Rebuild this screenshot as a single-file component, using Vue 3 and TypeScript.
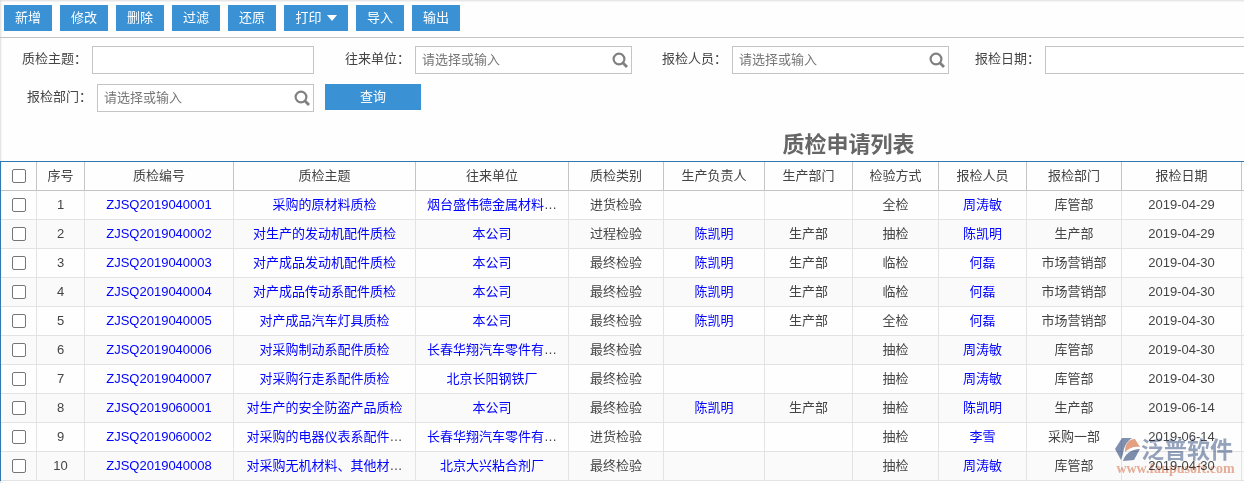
<script setup lang="ts">
import { ref } from 'vue'

interface Row {
  code: string
  subject: string
  company: string
  kind: string
  owner: string
  ownerDept: string
  method: string
  reporter: string
  dept: string
  date: string
}

const actions: { text: string; menu?: boolean }[] = [
  { text: '新增' },
  { text: '修改' },
  { text: '删除' },
  { text: '过滤' },
  { text: '还原' },
  { text: '打印', menu: true },
  { text: '导入' },
  { text: '输出' },
]

const fields = ref([
  { id: 'subject', label: '质检主题', lookup: false, value: '' },
  { id: 'company', label: '往来单位', lookup: true, value: '' },
  { id: 'reporter', label: '报检人员', lookup: true, value: '' },
  { id: 'date', label: '报检日期', lookup: false, value: '' },
  { id: 'dept', label: '报检部门', lookup: true, value: '' },
])

const headers = [
  '序号', '质检编号', '质检主题', '往来单位', '质检类别', '生产负责人',
  '生产部门', '检验方式', '报检人员', '报检部门', '报检日期',
]

const source: string[][] = [
  ['ZJSQ2019040001', '采购的原材料质检', '烟台盛伟德金属材料…', '进货检验', '', '', '全检', '周涛敏', '库管部', '2019-04-29'],
  ['ZJSQ2019040002', '对生产的发动机配件质检', '本公司', '过程检验', '陈凯明', '生产部', '抽检', '陈凯明', '生产部', '2019-04-29'],
  ['ZJSQ2019040003', '对产成品发动机配件质检', '本公司', '最终检验', '陈凯明', '生产部', '临检', '何磊', '市场营销部', '2019-04-30'],
  ['ZJSQ2019040004', '对产成品传动系配件质检', '本公司', '最终检验', '陈凯明', '生产部', '临检', '何磊', '市场营销部', '2019-04-30'],
  ['ZJSQ2019040005', '对产成品汽车灯具质检', '本公司', '最终检验', '陈凯明', '生产部', '全检', '何磊', '市场营销部', '2019-04-30'],
  ['ZJSQ2019040006', '对采购制动系配件质检', '长春华翔汽车零件有…', '最终检验', '', '', '抽检', '周涛敏', '库管部', '2019-04-30'],
  ['ZJSQ2019040007', '对采购行走系配件质检', '北京长阳钢铁厂', '最终检验', '', '', '抽检', '周涛敏', '库管部', '2019-04-30'],
  ['ZJSQ2019060001', '对生产的安全防盗产品质检', '本公司', '最终检验', '陈凯明', '生产部', '抽检', '陈凯明', '生产部', '2019-06-14'],
  ['ZJSQ2019060002', '对采购的电器仪表系配件…', '长春华翔汽车零件有…', '进货检验', '', '', '抽检', '李雪', '采购一部', '2019-06-14'],
  ['ZJSQ2019040008', '对采购无机材料、其他材…', '北京大兴粘合剂厂', '最终检验', '', '', '抽检', '周涛敏', '库管部', '2019-04-30'],
]

const rows: Row[] = source.map(
  ([code, subject, company, kind, owner, ownerDept, method, reporter, dept, date]) => ({
    code, subject, company, kind, owner, ownerDept, method, reporter, dept, date,
  }),
)

const linked: (keyof Row)[] = ['code', 'subject', 'company', 'owner', 'reporter']
const keys: (keyof Row)[] = [
  'code', 'subject', 'company', 'kind', 'owner', 'ownerDept', 'method', 'reporter', 'dept', 'date',
]

const picked = ref<boolean[]>(rows.map(() => false))

function toggleAll(e: Event) {
  const on = (e.target as HTMLInputElement).checked
  picked.value = rows.map(() => on)
}
</script>

<template>
  <div class="page" lang="zh-CN">
    <nav class="toolbar">
      <button v-for="a in actions" :key="a.text" type="button" class="btn" :class="{ menu: a.menu }">
        {{ a.text }}<span v-if="a.menu" class="caret"></span>
      </button>
    </nav>

    <form class="filters" @submit.prevent>
      <div v-for="f in fields" :key="f.id" class="field">
        <label :for="f.id">{{ f.label }}：</label>
        <div class="box" :class="{ lookup: f.lookup }">
          <input :id="f.id" v-model="f.value" type="text" :placeholder="f.lookup ? '请选择或输入' : ''" />
          <svg v-if="f.lookup" class="glass" viewBox="0 0 16 16" aria-hidden="true">
            <circle cx="7" cy="7" r="5.4" fill="none" stroke="#808080" stroke-width="2.2" />
            <path d="M10.8 10.8L15 15" stroke="#808080" stroke-width="2.8" />
          </svg>
        </div>
      </div>
      <div class="submit">
        <button type="submit" class="btn query">查询</button>
      </div>
    </form>

    <main class="sheet">
      <h1>质检申请列表</h1>
      <table>
        <colgroup>
          <col class="w-check" />
          <col class="w-no" />
          <col class="w-code" />
          <col class="w-subject" />
          <col class="w-company" />
          <col class="w-kind" />
          <col class="w-owner" />
          <col class="w-short" />
          <col class="w-method" />
          <col class="w-short" />
          <col class="w-kind" />
          <col class="w-date" />
          <col />
        </colgroup>
        <thead>
          <tr>
            <th><input type="checkbox" aria-label="全选" @change="toggleAll" /></th>
            <th v-for="h in headers" :key="h">{{ h }}</th>
            <th></th>
          </tr>
        </thead>
        <tbody>
          <tr v-for="(r, i) in rows" :key="r.code">
            <td><input v-model="picked[i]" type="checkbox" :aria-label="r.code" /></td>
            <td>{{ i + 1 }}</td>
            <td v-for="k in keys" :key="k">
              <template v-if="linked.includes(k) && r[k]"><a href="#">{{ r[k].replace('…', '') }}</a>{{ r[k].endsWith('…') ? '…' : '' }}</template>
              <template v-else>{{ r[k] }}</template>
            </td>
            <td></td>
          </tr>
        </tbody>
      </table>
    </main>

    <div class="mark">
      <div class="brand">
        <svg class="logo" viewBox="0 0 26 26" aria-hidden="true">
          <path d="M7 1H17C11 5 9 10 8 17L6 23L0 12Z" fill="#8090b0" />
          <path d="M10 15C10 6 14 2 20 2L25 10C19 9 14 11 10 15Z" fill="#e5a184" />
          <path d="M8 24C10 17 16 12 25 12L19 23Z" fill="#8090b0" />
        </svg>
        <span class="name">泛普软件</span>
      </div>
      <div class="site">www.fanpusoft.com</div>
    </div>
  </div>
</template>

<style>
body {
  margin: 0;
  background: #fefefe;
}
</style>

<style scoped>
.page {
  position: relative;
  overflow: hidden;
  min-height: 100vh;
  box-sizing: border-box;
  color: #444;
  font: 13px/20px "Liberation Sans", "Noto Sans CJK SC", sans-serif;
  box-shadow: inset 1px 1px 2px #ddd;
}
.toolbar {
  display: flex;
  gap: 8px;
  padding: 5px 4px 6px;
  border-bottom: 1px solid #c4c4c4;
}
.btn {
  display: flex;
  align-items: center;
  justify-content: center;
  height: 26px;
  padding: 0 11px;
  border: 0;
  background: #3a92d5;
  color: #fff;
  font: inherit;
  white-space: nowrap;
}
.menu {
  min-width: 64px;
}
.caret {
  margin-left: 5px;
  border: 5px solid transparent;
  border-top: 6px solid #fff;
  border-bottom: 0;
}
.filters {
  display: grid;
  grid-template-columns: 314px 318px 317px 318px;
  row-gap: 10px;
  padding-top: 8px;
}
.field {
  display: flex;
  justify-content: flex-end;
  gap: 5px;
}
.field label {
  line-height: 26px;
}
.box {
  display: flex;
  align-items: center;
  box-sizing: border-box;
  width: 222px;
  height: 28px;
  border: 1px solid #c4c4c4;
  background: #fff;
}
.box.lookup {
  width: 217px;
}
.box input {
  flex: 1;
  min-width: 0;
  height: 24px;
  padding: 0 6px 2px;
  border: 0;
  outline: 0;
  background: transparent;
  color: #444;
  font: inherit;
}
.box input::placeholder {
  color: #777;
}
.glass {
  width: 16px;
  height: 16px;
  margin-right: 3px;
}
.submit {
  padding-left: 11px;
}
.query {
  width: 96px;
}
.sheet {
  min-width: 1697px;
}
h1 {
  margin: 17px 0 0;
  color: #666;
  font-size: 22px;
  line-height: 32px;
  text-align: center;
}
table {
  width: 100%;
  table-layout: fixed;
  border-spacing: 0;
  border-top: 1px solid #3279b4;
  border-left: 1px solid #3279b4;
}
.w-check { width: 36px; }
.w-no { width: 48px; }
.w-code { width: 149px; }
.w-subject { width: 182px; }
.w-company { width: 153px; }
.w-kind { width: 95px; }
.w-owner { width: 101px; }
.w-short { width: 88px; }
.w-method { width: 86px; }
.w-date { width: 120px; }
th,
td {
  box-sizing: border-box;
  height: 29px;
  padding: 0;
  border-right: 1px solid #e3e3e3;
  border-bottom: 1px solid #e3e3e3;
  font-weight: normal;
  text-align: center;
  white-space: nowrap;
}
th {
  border-color: #c4c4c4;
}
tbody tr:nth-child(even) {
  background: #fafafa;
}
a {
  color: #00f;
  text-decoration: none;
}
input[type="checkbox"] {
  display: block;
  box-sizing: border-box;
  width: 14px;
  height: 14px;
  margin: 0 auto;
  appearance: none;
  border: 1px solid #767676;
  border-radius: 2px;
  background: #fff;
}
input[type="checkbox"]:checked {
  background: #3a92d5;
}
.mark {
  position: absolute;
  right: 8px;
  bottom: 8px;
  width: 121px;
  mix-blend-mode: multiply;
  pointer-events: none;
}
.brand {
  display: flex;
  align-items: center;
  color: #96a3bd;
}
.logo {
  width: 26px;
  height: 26px;
}
.name {
  font-size: 23px;
  font-weight: bold;
  line-height: 24px;
}
.site {
  color: #eab09a;
  font: bold 14px/12px "Liberation Serif", serif;
  text-align: center;
}
</style>
